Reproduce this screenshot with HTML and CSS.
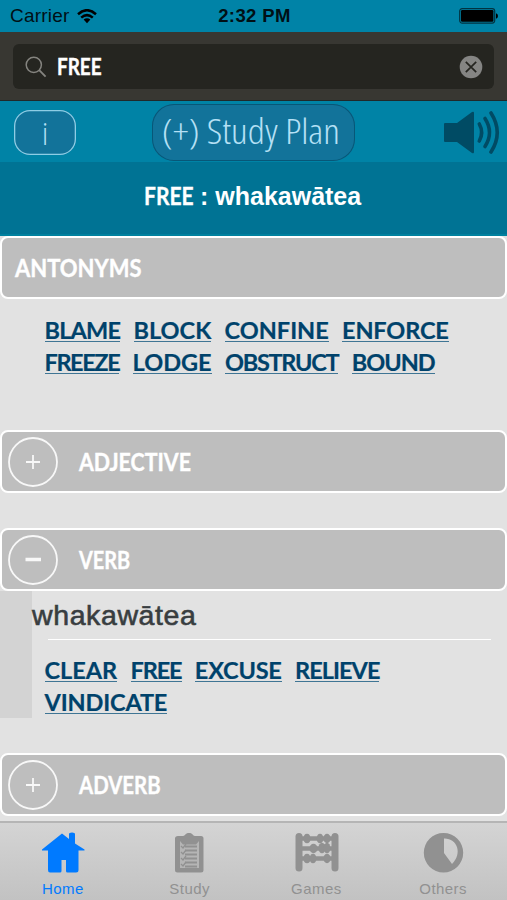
FILE: index.html
```html
<!DOCTYPE html>
<html lang="en">
<head>
<meta charset="utf-8">
<title>Dictionary</title>
<link rel="stylesheet" href="styles.css">
</head>
<body>
<div class="app">
  <header class="status">
    <div class="carrier"><span>Carrier</span>
      <svg width="20" height="15" viewBox="0 0 20 15"><path d="M1 5.2Q10-2.8 19 5.2M4.2 8.6Q10 3.6 15.8 8.6" fill="none" stroke="#000" stroke-width="2.5"/><path d="M6.6 10.6Q10 7.7 13.4 10.6L10 14.2Z"/></svg>
    </div>
    <time>2:32 PM</time>
    <svg class="battery" width="40" height="16" viewBox="0 0 40 16"><rect x=".7" y=".7" width="35" height="14.4" rx="2.5" fill="none" stroke="#003341" stroke-width="1.2"/><rect x="2" y="2" width="32.4" height="11.8" rx="1.2"/><path d="M37 5.2Q39 5.8 39 8T37 10.8Z"/></svg>
  </header>
  <div class="search">
    <div class="field">
      <svg width="22" height="22" viewBox="0 0 22 22" fill="none" stroke="#85847f" stroke-width="1.5"><circle cx="8.8" cy="8.8" r="7.6"/><path d="M14.2 14.2L20.6 20.6" stroke-width="1.9"/></svg>
      <span class="query">FREE</span>
      <svg width="24" height="24" viewBox="0 0 24 24"><circle cx="12" cy="12" r="11.3" fill="#858583"/><path d="M6.8 6.8L17.2 17.2M17.2 6.8L6.8 17.2" stroke="#252520" stroke-width="1.7"/></svg>
    </div>
  </div>
  <nav class="tools">
    <button class="info">i</button>
    <button class="plan"><svg width="203" height="57"><text x="10" y="40" textLength="178" lengthAdjust="spacingAndGlyphs">(+) Study Plan</text></svg></button>
    <svg class="speaker" width="56" height="44" viewBox="0 0 56 44"><path d="M0 13Q0 12 1 12H13L28 1Q30 0 30 2V41Q30 43 28 42L13 31H1Q0 31 0 30Z" fill="#004b64"/><g fill="none" stroke="#004b64" stroke-width="3.6" stroke-linecap="round"><path d="M35.300 13Q40 21.500 35.300 30"/><path d="M41 7.500Q50 21.500 41 35.500"/><path d="M47 2Q59.500 21.500 47 41"/></g></svg>
  </nav>
  <h1 class="title"><span class="en">FREE</span><span class="mi">: whakawātea</span></h1>
  <main>
    <h2 class="card"><span class="w-ant">ANTONYMS</span></h2>
    <div class="words antonyms">
      <div class="line"><a class="blame">BLAME</a><a class="block">BLOCK</a><a class="confine">CONFINE</a><a class="enforce">ENFORCE</a></div>
      <div class="line"><a class="freeze">FREEZE</a><a class="lodge">LODGE</a><a class="obstruct">OBSTRUCT</a><a class="bound">BOUND</a></div>
    </div>
    <h2 class="card"><svg class="toggle" viewBox="0 0 50 50"><circle cx="25" cy="25" r="24"/><path d="M18 25H32M25 18V32"/></svg><span class="w-adj">ADJECTIVE</span></h2>
    <h2 class="card verb"><svg class="toggle" viewBox="0 0 50 50"><circle cx="25" cy="25" r="24"/><path class="minus" d="M17.500 24.500H33"/></svg><span class="w-verb">VERB</span></h2>
    <section class="entry">
      <div class="rail"></div>
      <div class="body">
        <h3>whakawātea</h3>
        <div class="words senses">
          <div class="line"><a class="clear">CLEAR</a><a class="free">FREE</a><a class="excuse">EXCUSE</a><a class="relieve">RELIEVE</a></div>
          <div class="line"><a class="vindicate">VINDICATE</a></div>
        </div>
      </div>
    </section>
    <h2 class="card adverb"><svg class="toggle" viewBox="0 0 50 50"><circle cx="25" cy="25" r="24"/><path d="M18 25H32M25 18V32"/></svg><span class="w-adv">ADVERB</span></h2>
  </main>
  <footer class="tabs">
    <div class="tab active"><svg width="44" height="42" viewBox="0 0 44 42"><path d="M1 17.500L21 1.500L28 7V1.500Q31-.5 34 1.500V11.500L43.500 17.500V18.500H37.500V38Q37.500 40.500 35 40.500H26.500Q25 40.500 25 39V28H20.500V39Q20.500 40.500 19 40.500H9Q7 40.500 7 38V18.500H1Z"/></svg><span>Home</span></div>
    <div class="tab"><svg width="44" height="42" viewBox="0 0 44 42"><path d="M10 4H15C18 3.500 17 1 21 1S24 3.500 27 4H33Q35.500 4 35.500 6.500V38Q35.500 40.500 33 40.500H9.500Q7 40.500 7 38V6.500Q7 4 10 4"/><path d="M12 9V36H31V9L28 12.500H15Z" fill="#b5b5b5"/><path d="M17 14.500H29M17 18.500H29M17 22.500H29M17 26.500H29M17 30.500H29M17 34.500H29" stroke="#919191" stroke-width="1.800"/><path d="M13 14L15 16L18 12M13 20L15 22L18 18M13 26L15 28L18 24M13 32L15 34L18 30" fill="none" stroke="#919191" stroke-width="1.300"/></svg><span>Study</span></div>
    <div class="tab"><svg width="44" height="42" viewBox="0 0 44 42"><rect x=".5" y="1" width="7" height="38.500" rx="3.500"/><rect x="36.500" y="1" width="7" height="38.500" rx="3.500"/><path d="M5 6.500H39M5 16.500H39M5 26.500H39" stroke="#919191" stroke-width="4.500"/><g><ellipse cx="12" cy="6.500" rx="3.400" ry="4.700"/><ellipse cx="25" cy="6.500" rx="3.200" ry="4.700"/><ellipse cx="32" cy="6.500" rx="3.600" ry="4.700"/><ellipse cx="18.500" cy="16.500" rx="4" ry="4.700"/><ellipse cx="27" cy="16" rx="3.600" ry="5.200"/><ellipse cx="32" cy="16" rx="3.400" ry="5.200"/><ellipse cx="12" cy="26.500" rx="3.400" ry="4.700"/><ellipse cx="18" cy="26.500" rx="3.200" ry="4.700"/><ellipse cx="32" cy="26.500" rx="3.600" ry="4.700"/></g></svg><span>Games</span></div>
    <div class="tab"><svg width="44" height="42" viewBox="0 0 44 42"><path fill-rule="evenodd" d="M21.500 1A19.700 19.700 0 1 0 21.500 40.400A19.700 19.700 0 1 0 21.500 1M22 6.500C35 6 41 21 30 32L22 21Z"/></svg><span>Others</span></div>
  </footer>
</div>
</body>
</html>
```
FILE: styles.css
```css
* { box-sizing: border-box; }
body { margin: 0; background: #e2e2e2; font-family: "Liberation Sans", sans-serif; }
h1, h2, h3 { margin: 0; }
svg { display: block; flex: none; }
.app { width: 507px; height: 900px; display: flex; flex-direction: column; overflow: hidden; }
.status { height: 32px; flex: none; background: #0083a7; display: grid; grid-template-columns: 1fr auto 1fr; align-items: center; padding: 0 8px 0 10px; font-size: 19px; color: #001016; }
.carrier { display: flex; align-items: center; gap: 8px; letter-spacing: .2px; }
.status time { font-weight: bold; font-size: 18.5px; letter-spacing: .4px; }
.battery { justify-self: end; }
.search { height: 69px; flex: none; background: #383732; padding: 12px 13px; border-bottom: 1px solid #20292a; }
.field { height: 45px; border-radius: 6px; background: #252520; display: flex; align-items: center; padding: 0 11px 0 12px; }
.query { flex: 1; padding-left: 10px; color: #fff; font: bold 22px Lato, sans-serif; transform: scaleX(.86); transform-origin: 10px 50%; -webkit-text-stroke: .4px; }
.tools { height: 61px; flex: none; background: #0083a6; display: grid; grid-template-columns: 138px 1fr 56px; padding: 2px 7px 0 14px; align-items: center; }
.tools button { padding: 0; border: 0; background: #12739a; }
.plan text { font-family: "Open Sans", sans-serif; font-weight: 300; font-stretch: 75%; font-size: 34px; fill: #b5e0f5; }
.info { width: 62px; height: 45px; border-radius: 16px; box-shadow: inset 0 0 0 1.3px #8ecde5; color: #b5e0f5; font: 300 32px/45px "Open Sans", sans-serif; font-stretch: 75%; }
.plan { width: 203px; height: 57px; border-radius: 22px; box-shadow: inset 0 0 0 1px #075778; }
.title { height: 74px; flex: none; background: #007394; border-bottom: 2px solid #00819f; color: #fff; display: flex; justify-content: flex-start; padding-left: 144px; line-height: 68px; }
.en { width: 56px; font: bold 24.5px/68px Lato, sans-serif; transform: scaleX(.86); transform-origin: 0 50%; -webkit-text-stroke: .3px; }
.mi { font-size: 25px; font-weight: bold; letter-spacing: 0; }
main { flex: 1; }
.card { height: 63px; background: #bebebe; border: 2px solid #fff; border-radius: 8px; display: flex; align-items: center; color: #fff; font: bold 24px Lato, sans-serif; padding-left: 6px; gap: 21px; }
.card:first-child { padding-left: 13px; }
.card span { transform-origin: 0 50%; -webkit-text-stroke: .4px; }
.w-ant { transform: scaleX(.915); }
.w-adj { transform: scaleX(.89); }
.w-verb { transform: scaleX(.83); }
.w-adv { transform: scaleX(.85); }
.toggle { width: 50px; height: 50px; fill: none; stroke: #f8f8f8; stroke-width: 1.8; }
.toggle .minus { stroke-width: 3.5; }
.words { font: bold 23.5px/30px Lato, sans-serif; color: #00426b; -webkit-text-stroke: .2px; }
.line { display: flex; height: 32px; }
.line a { height: 27px; line-height: 30px; border-bottom: 1.5px solid #3f7594; white-space: nowrap; margin-right: 13.3px; }
.blame { letter-spacing: -.8px; }
.enforce { letter-spacing: -.15px; }
.freeze { letter-spacing: -1.4px; }
.obstruct { letter-spacing: -1.25px; }
.bound { letter-spacing: -1px; }
.free { letter-spacing: -1.1px; }
.excuse { letter-spacing: -.2px; }
.relieve { letter-spacing: -.95px; }
.vindicate { letter-spacing: -.15px; }
.antonyms { height: 131px; padding: 16px 0 0 44.5px; }
.verb { margin-top: 35px; }
.entry { display: flex; height: 127px; }
.rail { width: 32px; background: #d3d3d3; }
.body { flex: 1; }
.body h3 { height: 49px; line-height: 48px; font-size: 28.5px; letter-spacing: .6px; font-weight: normal; color: #383d40; -webkit-text-stroke: .6px #383d40; position: relative; }
.body h3::after { content: ""; position: absolute; left: 16px; right: 16px; bottom: 0; height: 1.5px; background: #fff; }
.senses { padding: 14.5px 0 0 12.5px; }
.adverb { margin-top: 35px; }
.tabs { height: 79px; flex: none; border-top: 2px solid #b5b5b5; background: linear-gradient(#d4d4d4, #c2c2c2); display: grid; grid-template-columns: repeat(4, 1fr); }
.tab { display: flex; flex-direction: column; align-items: center; padding-top: 9px; font-size: 15px; letter-spacing: .45px; color: #919191; fill: #919191; line-height: 17px; gap: 6px; }
.tab span { margin-right: 1px; }
.active { color: #007aff; fill: #007aff; }
```
